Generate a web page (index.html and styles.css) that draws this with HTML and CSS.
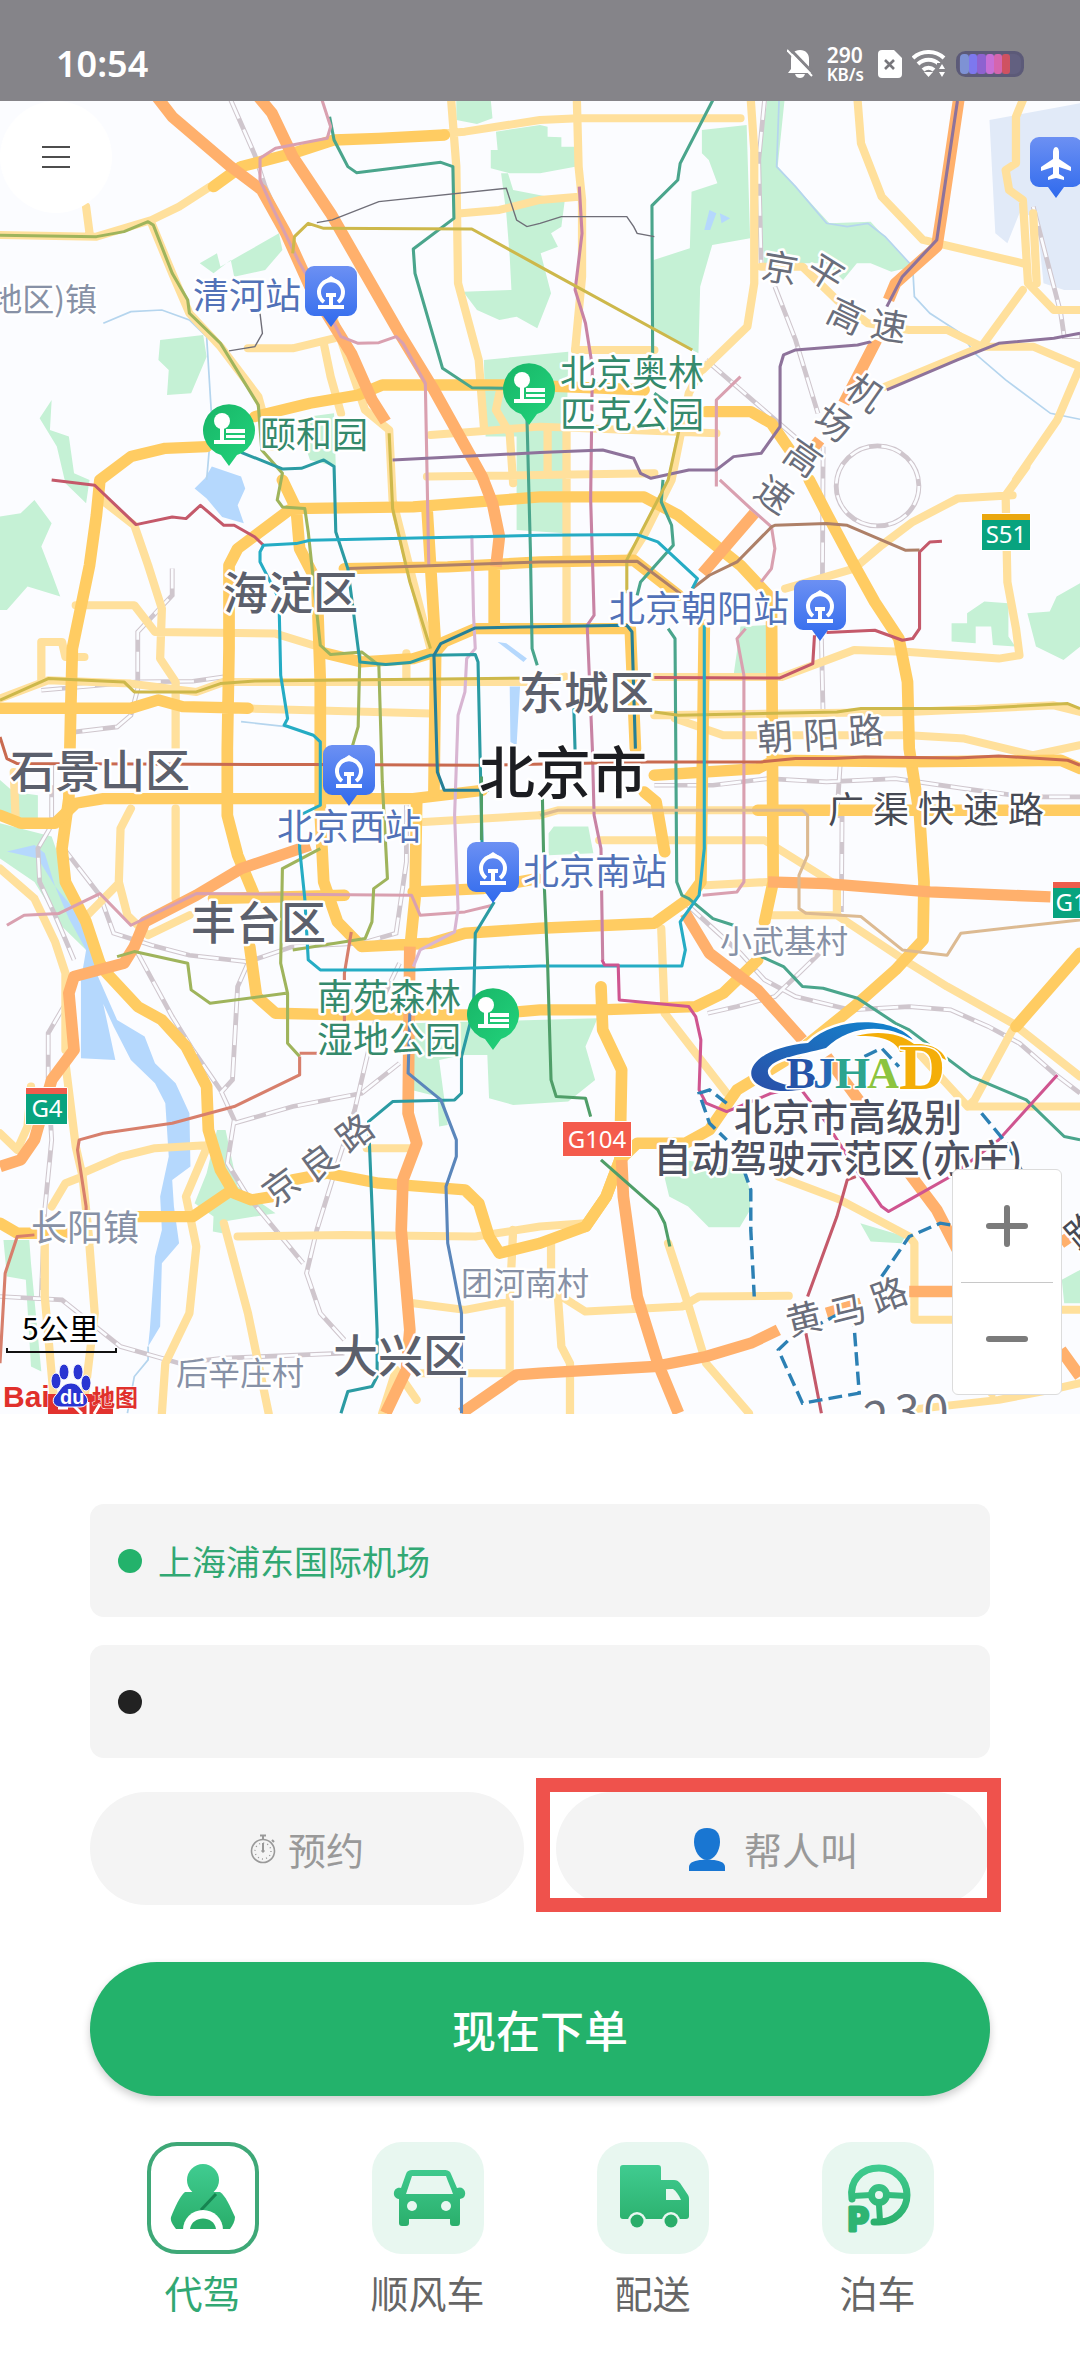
FILE: index.html
```html
<!DOCTYPE html>
<html lang="zh-CN">
<head>
<meta charset="utf-8">
<meta name="viewport" content="width=device-width, initial-scale=1">
<title>代驾</title>
<link rel="stylesheet" href="styles.css">
</head>
<body>
<header class="status">
  <time class="clock">10:54</time>
  <div class="status-icons">
    <svg class="bell" width="26" height="30" viewBox="0 0 26 30" aria-hidden="true">
      <path d="M13 1c6 0 9 4 9 9v8l3 6H1l3-4v-10c0-5 3-9 9-9zM8 25h10c-1 3-3 4-5 4s-4-1-5-4z" fill="#fff"/>
      <path d="M2 -1l26 27" stroke="#858489" stroke-width="3"/><path d="M0 1l25 26" stroke="#fff" stroke-width="2"/>
    </svg>
    <div class="speed"><span class="speed-num">290</span><span class="speed-unit">KB/s</span></div>
    <svg class="sim" width="24" height="28" viewBox="0 0 24 28" aria-hidden="true">
      <path d="M4 0h12l8 8v16a4 4 0 0 1-4 4H4a4 4 0 0 1-4-4V4a4 4 0 0 1 4-4z" fill="#fff"/>
      <path d="M7 10l9 9M16 10l-9 9" stroke="#77767b" stroke-width="2.6"/>
    </svg>
    <svg class="wifi" width="34" height="28" viewBox="0 0 34 28" aria-hidden="true">
      <g fill="none" stroke="#fff" stroke-width="4"><path d="M1 8a23 23 0 0 1 31 0"/><path d="M6 14a15 15 0 0 1 21 0"/><path d="M11 20a8 8 0 0 1 11 0"/></g>
      <path d="M12 22h9l-4.500 5z" fill="#fff"/><path d="M25 13h9v15h-9z" fill="#858489"/>
      <path d="M30 14l3 5h-6zM30 27l3-5h-6z" fill="#fff"/>
    </svg>
    <svg class="battery" width="68" height="26" viewBox="0 0 68 26" aria-hidden="true">
      <rect x="1.500" y="1.500" width="65" height="23" rx="8" fill="#626080" stroke="#5c5a78" stroke-width="3"/>
      <rect x="4" y="3" width="9" height="20" rx="4" fill="#7e92d4"/><rect x="13" y="3" width="8" height="20" rx="3" fill="#7d78ee"/>
      <rect x="21" y="3" width="9" height="20" rx="3" fill="#8e62d0"/><rect x="30" y="3" width="8" height="20" rx="3" fill="#c76fd6"/>
      <rect x="38" y="3" width="8" height="20" rx="3" fill="#d565ae"/><rect x="46" y="3" width="8" height="20" rx="3" fill="#cf5261"/>
    </svg>
  </div>
</header>

<main>
<section class="map" aria-label="地图">
<svg class="map-canvas" viewBox="0 0 1080 1313" role="img" aria-label="北京市">
<defs>
  <linearGradient id="blue" x1="0" y1="0" x2="0" y2="1"><stop offset="0" stop-color="#6c90f3"/><stop offset="1" stop-color="#2f6aed"/></linearGradient>
  <linearGradient id="leaf" x1="0" y1="0" x2="1" y2="1"><stop offset="0" stop-color="#18b567"/><stop offset="1" stop-color="#22d47c"/></linearGradient>
  <linearGradient id="swoosh" x1="0" y1="1" x2="1" y2="0"><stop offset="0" stop-color="#2a4fa8"/><stop offset="1" stop-color="#1286cf"/></linearGradient>
  <g id="station">
    <path d="M-17 0h34a9 9 0 0 1 9 9v32a9 9 0 0 1-9 9h-9l-8 11-8-11h-9a9 9 0 0 1-9-9V9a9 9 0 0 1 9-9z" fill="url(#blue)"/>
    <path d="M-7 36a12 12 0 1 1 14 0" fill="none" stroke="#fff" stroke-width="4"/>
    <path d="M-6 14l6-4 6 4zM-13 39h26v4h-26zM-2 29h4v10h-4zM-5 27h10v4h-10z" fill="#fff"/>
  </g>
  <g id="park">
    <path d="M0 36l-8-11A26 26 0 1 1 8 25z" fill="url(#leaf)"/>
    <circle cx="-7" cy="-9" r="8" fill="#fff"/>
    <path d="M-9-3h4v14h-4zM-15 10h31v4h-31zM-3-1h19v4h-19zM-3 5h19v3h-19z" fill="#fff"/>
  </g>
  <g id="rails">
    <path d="M670 300L740 465 770 560 830 700 900 870M2220 300L2203 480 2210 790M2250 860L2310 1020 2375 1240M2390 1340L2388 1746M2385 1916L2390 2146M2050 1080L2330 1330M500 1706V1786L400 1896V2066L380 2146 340 2181 220 2196M120 2071L400 2046 560 2044 650 2031M150 2296V2476L110 2546 115 2646 160 2746 215 2880M170 2526L290 2686 330 2800 440 2836 550 2866 720 2886 850 2840 1050 2830 1150 2800 1180 2586V2416"/>
    <path d="M185 3020L140 3100V3240L150 3420 130 3630 120 3890M400 2860L500 3050 560 3150 640 3270 680 3360 660 3490 720 3590 880 3790M720 2890L690 2960 675 3240 640 3280M680 3370L850 3320 1050 3280 1160 3190M1160 2890L1100 3020 1050 3240 1030 3330 980 3490 920 3690 890 3820 930 3940 1000 4020M0 3890L180 3900 350 4040 520 4090 650 4075 1000 4060"/>
    <path d="M1900 2356H2070L2230 2336 2400 2346 2600 2336 2800 2366 2980 2391H3136M2440 2286L2430 2446 2445 2450 2443 2736M1990 2710L2150 2860 2220 2940 2310 2990 2470 3030 2640 3020 2760 3030 2870 3080 2960 3130 3060 3220 3136 3280M2055 3040L2140 3020 2250 2990 2390 2850M3000 620L3080 940 3090 1010 3136 1010"/>
    <ellipse cx="2548" cy="1458" rx="120" ry="120"/>
  </g>
</defs>
<rect width="1080" height="1313" fill="#fbfcff"/>
<g transform="translate(0 -101) scale(.3444 .3333)">
  <g class="green">
    <path d="M1325 300H1425L1430 355 1385 372 1325 360zM1440 395L1568 375 1590 380V410L1630 412V440H1670V500L1568 520H1480L1425 505V450H1445zM1455 520H1475L1490 570 1640 600 1630 680 1600 700 1620 740 1570 760 1600 880 1560 985 1500 950 1450 960 1385 930 1345 875 1485 870 1480 770 1470 640zM1405 1080L1650 1055 1640 1600 1500 1590V1310H1410z"/>
    <path d="M580 790L630 760 640 800 810 700 820 750 770 810 680 830 670 780 620 820zM465 1020L590 1005 600 1070 555 1180 485 1185 490 1110 460 1080zM115 1255L150 1200 145 1290 200 1310 215 1420 260 1440 250 1510 190 1450 165 1340zM860 1255L970 1240 975 1400 900 1380z"/>
    <path d="M2038 390L2168 375 2178 715 2068 735 2033 860 2028 1060 1898 990V780L2003 745 2008 575 2083 550 2058 480 2038 460zM2228 300H2278L2258 500 2408 670 2528 665 2648 800 2588 815 2528 790H2488L2448 840 2398 790H2218L2203 480z"/>
    <path d="M0 1550L60 1540 100 1500 150 1570 120 1640 150 1720 175 1790 80 1760 20 1830H0zM0 2340L40 2376 110 2386V2466L0 2446zM0 2470L150 2510 230 2746 250 2850 180 2780 100 2646 0 2576zM2150 1880L2233 1875V2030L2130 2026zM2763 1870H2808V1840L2858 1805 2928 1810V1910L2948 1940 2883 1935 2878 1880H2833V1930L2763 1925zM2983 1840L3048 1835 3068 1790 3136 1750V1940L3088 1980 3008 1940zM1593 2500L1608 2480H1708L1723 2560 1593 2566z"/>
    <path d="M1195 3070L1735 3055 1700 3140 1728 3240 1650 3305 1490 3315 1420 3295 1415 3165H1345L1275 3180 1300 3375 1275 3380 1270 3290 1195 3270zM630 3390H655L690 3560 800 3640 650 3665 645 3700 618 3695 620 3650 565 3610 600 3520zM10 3720H85L90 3790 120 4115 90 4100 75 3840 20 3830zM1928 3525L1988 3480 2158 3510 2178 3570V3630L2148 3682H2058L1998 3620 1943 3590zM2498 3670L2628 3710 2618 3730 2528 3725zM3083 3840L3136 3810V3910H3090z"/>
  </g>
  <path d="M2873 360L3136 310V870H3090L3030 850 3010 650 2960 640 2925 730 2890 700z" fill="#e1eaf8"/>
  <g class="water">
    <path d="M615 1400L700 1430 712 1466 690 1516 708 1570 645 1551 600 1496 565 1466 595 1435zM20 2555L100 2535 130 2560 160 2660 230 2746 270 2870 335 3180 235 3175V2940L250 2850 200 2756 160 2660 110 2576zM255 2860L310 2990 340 3060 420 3110 450 3190 510 3250 550 3340 553 3500 500 3540 505 3620 520 3730 470 3790 465 3980 430 4040 435 3990 450 3770 470 3690 465 3590 490 3470 480 3310 450 3250 380 3180 330 3080 290 2990zM1480 2060H1510L1500 2236 1482 2226zM1445 1926L1470 1930 1530 1976 1520 1986zM2045 690L2060 630 2080 640 2062 690zM2090 640L2120 655 2095 670z"/>
  </g>
  <path class="river" d="M430 4040V4080L390 4130 370 4240M2262 303L2255 500 2310 560 2400 670 2460 680 2520 670 2570 710 2650 800 2655 890 2700 940 2790 1000 2830 1060 2920 1140 3050 1240 3136 1258M300 970L380 935 470 930 550 960 600 1010 615 1260 600 1440M700 2165L830 2180"/>
  <use href="#rails" class="rail-edge"/><use href="#rails" class="rail-core"/>
  <g class="road minor">
    <path d="M0 705L280 710 440 660 520 620 610 560M250 620L260 700M1290 400L1350 395 1568 360 1680 355 2150 355M1310 300L1325 500 1330 850 1390 1080 1405 1280M1675 300L1680 500 1690 600V830L1670 1050M1340 640L1450 630 1568 600 1680 590M2180 300L2190 450V850L2170 980 2040 1110M2490 300L2500 430 2560 590 2680 720 2970 790M2970 300L2950 350V490L2920 510 2930 570 2970 600 2985 850 3060 930 3136 930M3000 640L3010 850M2970 870L2850 1040 2570 1160M2640 990H2750L2850 1040H3000L3136 1100 3070 1260 2950 1440M2210 800H2330L2430 900 2520 970 2640 990"/>
    <path d="M440 670L500 820 550 940 640 1040 750 1190 790 1340M720 1045H850L970 1015M940 1030L960 1130 990 1240M970 960L1060 1230 1130 1290 1140 1500 1200 1746 1250 1946M1250 1305L1568 1280 2080 1300M1240 1430L1568 1425 1900 1420M1645 1280V1880M1590 1290V1420M1450 1180L1440 1230 1480 1300 1490 1450M2000 1180L1950 1440 1870 1606 1820 1686M1670 1050H1900M2040 1100L2000 1180"/>
    <path d="M290 1496L390 1576 430 1696 470 1826 465 1976 510 2046V2246M510 2426V2696M220 1816H390L450 1896 800 1901 910 1936M120 2046V1926H180L190 1971H245M0 2096L140 2041 380 2051 570 2076 650 2046H1568L1640 2030M730 2126L1250 2141M40 2316L45 2446M0 2606L100 2696 160 2826 190 2920V3150M380 2426L350 2486 345 2646 370 2746 430 2806 550 2746M240 2760L345 2650M1230 2466L1568 2446M1180 1960V2040"/>
    <path d="M1568 2446L1620 2431H2330M2280 1766L2480 1706 2560 1636 2650 1566 2780 1496 2940 1486M2980 1400L2920 1486 2925 1746 2950 1886 2960 1966 2900 1976 2640 1956 2480 1950 2270 2031 1900 2031M1900 2146L2640 2136 3060 2116 3136 2136M1960 2156L2100 2206H2640L2800 2216 3000 2266 3136 2236M1740 2521H2220L2430 2656V2746M2050 2656L2230 2646M2230 2746H2430L2640 2890 2750 2960 2940 3070 3136 3230"/>
    <path d="M1920 2786L1930 3040 2080 3240 2110 3280M2940 3090L2830 3300 2810 3320H3136M2650 3140L2810 3320M240 3520L350 3470 450 3445 610 3435M610 3420L540 3590 570 3740 550 3940 480 4090 470 4240M650 3670L720 3940 780 4240M690 3710L1000 3705 1380 3710 1568 3680M1568 3680L1700 3670M130 3720V3890L160 4240M260 3740L275 3940 240 4240M240 3530L190 3550 150 3620M190 3190L220 3440 240 3530 260 3730M0 3400L50 3450 80 3380 90 3260M1065 3445H1200M1200 3910L1350 3930 1480 3905 1490 3690M1480 3910V4120H1210M1110 4240L1150 4110 1210 4200M1600 3730V3870L1700 3935 1980 3920 2030 3890 2290 3888M1620 3890L1630 4040 1655 4090V4240M1940 3730L2000 3920 2050 4090 2175 4240M2260 3530L2440 3600 2640 3710 2655 3730V3960H2780M2640 4230L2900 4200 3050 4170 3136 4150M2880 4180V4090M3080 3930H3136"/>
  </g>
  <g class="road main">
    <path d="M620 560L700 500 850 460 970 420 1100 415 1290 405M600 1340L480 1345 380 1370 290 1440 280 1546 260 1696 210 1946 205 2146 200 2396 180 2546 190 2646 250 2766 290 2890 310 2920 400 3020 470 3060 540 3140 600 3260 605 3390 640 3510 680 3580 730 3600 790 3590M850 3540L950 3520 1100 3550 1350 3570 1390 3610 1420 3710 1450 3760 1568 3730 1700 3680 1760 3590 1800 3480 1850 3430 1990 3430 2060 3390 2140 3270 2300 3170 2480 3020 2600 2910 2680 2820 2683 2646 2670 2446 2640 2246 2635 2046 2610 1916 2540 1806 2470 1676 2400 1540 2350 1440"/>
    <path d="M740 1250L900 1210 1040 1185 1110 1155 1500 1155 1870 1170M2050 1235H2180L2240 1270 2300 1360M0 2125H380L460 2100 530 2120 720 2125M0 2446L60 2470H160L220 2410 300 2396H1200L1400 2371M840 1530L690 1646 665 1696V1946L660 2246V2446L690 2566 740 2690M725 2840L745 2990 800 3040 1000 3045H1400L1568 3030H1740L2020 3020 2100 2980 2200 2880"/>
    <path d="M820 1440L860 1526 870 1646 920 1746 930 2046V2446L940 2646 980 2766 1050 2840 1250 2830 1350 2800 1568 2785 1900 2770 2000 2696 2035 2646 2045 1876M850 1526L1200 1521 1568 1491H1870L1970 1546 2150 1696 2240 1796 2245 2646 2220 2766M1000 1706L1300 1701 1568 1686 1840 1681 1970 1786M1240 1526L1265 1946 1260 2376M1435 1700V1870M1210 2396L1205 2696 1190 2850M1200 2676L1400 2666 1560 2636M620 2696L1000 2686"/>
    <path d="M930 1956L1050 1986 1200 1976 1265 1956 1290 1926 1380 1886H1830L1845 2246M1870 2376L1905 2406 1930 2556M1900 2326L2200 2306 2250 2281 2640 2286 3080 2281 3136 2306M2200 2431H3136M0 3670L50 3700H190M400 3650H560L660 3580M1745 2960L1750 3090 1805 3210 1800 3480M1800 3480L1760 3590 1700 3680M2950 3080L3136 2860"/>
  </g>
  <g class="road highway">
    <path d="M455 290L500 350 670 500 760 570 830 700 900 860 960 960 1020 1060 1080 1200 1120 1265M750 290L790 340 850 470 960 640 1060 820 1160 1000 1260 1170 1400 1430 1430 1510 1450 1610 1440 1700M2785 290L2735 640 2720 740 2600 850 2580 900M2545 1020L2450 1210M2380 1320L2340 1370M2190 1540L2040 1720M900 2536L700 2606 570 2686 420 2766 390 2840 360 2890 215 2930 200 2980 215 3150 150 3240 100 3420 60 3480 0 3500M1190 2840L1185 3340 1210 3430 1170 3540 1165 3690 1190 3990 1180 4110 1120 4240M2230 2646L2400 2651 2700 2676 3050 2691M1990 2740L2060 2860 2200 2970 2330 3120M2400 3170L2500 3310M2640 3520L2720 3630 2790 3770M3080 4050L3136 4130M1805 3480L1810 3590 1850 3890 1910 4090 1970 4240M1340 4240L1500 4125 1568 4120 1900 4100 2050 4070 2180 4030 2260 3990M2400 3940L2500 3910M2640 3875H2780M3080 3730L3136 3690"/>
  </g>
  <g class="metro">
    <g stroke="#4aa58c"><path d="M957 350L970 420 1010 500 1035 518 1280 487 1315 500 1318 655 1200 747 1205 820 1285 1105 1370 1163 1465 1165M2070 300L1975 490 1968 540 1893 617 1895 1060M1900 1180L1940 1210M1530 1250L1540 1646 1545 1946 1560 1996M1925 1440L1920 1506 1950 1576 1955 1636 1860 1746 1850 1786M1940 1886L1960 1916 1965 2646 1980 2686 2000 2696 2070 2756 2130 2776M2210 2870L2275 2900 2330 2960 2390 2965 2490 2995 2600 3070 2640 3090 2820 3230 2980 3300 3090 3410 3136 3420"/></g>
    <g stroke="#d9a0b0"><path d="M935 300L960 380 950 415 800 445 755 475V540L790 620 870 790 960 950 990 1010 1040 1030 1100 1028 1150 1010 1170 1030 1235 1150 1245 1696M2090 1440L2180 1526 2240 1581 2250 1646 2240 1706 2210 1746M2165 1886L2140 1916 2160 2026V2646L2140 2676 2040 2686M20 2776L70 2746 170 2741 290 2681 380 2776 570 2681 1195 2686 1220 2746 1350 2736 1430 2716M2080 1460V1200L2150 1130"/></g>
    <g stroke="#d8b5d2"><path d="M1370 1606L1375 1846 1380 1946 1355 1976 1350 2076 1330 2146 1320 2446 1330 2726 1320 2796 1220 2850 1200 2900"/></g>
    <g stroke="#c883a4"><path d="M1682 560L1690 700 1670 870 1700 970 1720 1100 1715 1496 1725 1846 1705 1876 1720 2246 1725 2446 1745 2546 1750 2880"/></g>
    <g stroke="#8e739b"><path d="M1140 1380L1568 1358 1750 1350 1840 1375 1860 1420 1890 1435 2000 1410H2080L2130 1370 2210 1360 2265 1280V1100L2275 1065 2310 1050 2490 1035 2530 1025M2575 1170L2780 1080 2900 1030 3060 1015 3136 1000M2780 303L2720 720 2620 830 2575 920"/></g>
    <g stroke="#9fb45c"><path d="M0 706L280 710 360 695 430 665 445 675 500 820 545 900 550 940 640 1030 750 1215 760 1350 820 1420 805 1500 820 1521 885 1526 895 1596 930 1936 960 1964 1050 1956 1100 1996 1110 2346 1125 2636 1085 2666 1080 2766 1060 2816 850 2850M340 2870L390 2855 545 2890 555 2970 610 3010 830 2980M1045 1960L1040 2180 1020 2250M930 2546L820 2606 815 2890 835 2980V3130L870 3170"/></g>
    <g stroke="#cdb84b"><path d="M850 760L855 710 895 670 940 685 1370 687 1568 800 2010 1050M0 2101L140 2036 360 2046 390 2076H570L640 2051 740 2043 1568 2034M1900 2136L1970 2146 2430 2136 2500 2126H2830L3100 2111 3136 2126M1130 1300L1140 1526 1190 1746 1250 1946M1980 1250L1940 1440 1820 1680V1780"/></g>
    <g stroke="#c96a50"><path d="M0 2211L20 2276 50 2291 900 2294 1400 2296 1880 2286H2210L2310 2276 2420 2276 2510 2271 2780 2274 2900 2268 3100 2281 3136 2296"/></g>
    <g stroke="#d77f6c"><path d="M870 3170V3225L680 3320 500 3370 300 3400 230 3420 225 3450 250 3620V3640M100 3705L50 3710 15 3820 0 4090M1020 2796L1000 2920V3080M870 3160H920"/></g>
    <g stroke="#c4596a"><path d="M150 1440L275 1456 395 1574 500 1551 540 1556 582 1516 650 1576 680 1576 740 1611 765 1636M1900 2033L2265 2034 2360 1991 2365 1906M2400 1898L2540 1891 2620 1921 2650 1916 2670 1886V1656L2700 1626 2735 1624M2485 3530L2460 3540 2430 3650 2345 3890M2340 4000L2385 4240"/></g>
    <g stroke="#ae8068"><path d="M2010 1766L2060 1726 2140 1686 2240 1581 2250 1576 2400 1571 2460 1576 2630 1651 2670 1650M1010 1706L1568 1686 1850 1684 1975 1781"/></g>
    <g stroke="#dcba92"><path d="M1568 2446L1620 2431H2330L2345 2446V2566L2320 2626V2726L2340 2740 2500 2750 2620 2850 2750 2866 2790 2800 3136 2760"/></g>
    <g stroke="#2b9ba3"><path d="M700 1357L820 1407 875 1405 940 1380 970 1400 975 1596 1010 1706 1045 1986 1120 1994 1190 1988 1250 1966 1380 1964 1388 1986 1400 2546M1435 2706L1380 2800 1375 3030 1340 3170V3280L1320 3300 1140 3305 1070 3365 1095 3990V4130L1080 4160 1010 4175 990 4240M1665 2080L1670 2260"/></g>
    <g stroke="#25acc4"><path d="M2010 1766L2025 1736 1910 1626 1850 1604 1568 1606 900 1621 860 1631 765 1636 755 1656V1686L810 1796 815 2026 835 2156 825 2176 910 2206 930 2226V2416L870 2446V2546L885 2696 895 2880 930 2910H1200L1568 2898H1980L1990 2850 1975 2766 2030 2686 2045 2546V1876"/></g>
    <g stroke="#267f96"><path d="M1420 2371L1290 2371 1270 2316 1260 1966 1280 1931 1380 1884 1820 1876 1835 1896 1845 2246"/></g>
    <g stroke="#4f9e68"><path d="M1575 2396L1580 2646 1590 2890 1600 3240 1615 3290 1700 3295 1715 3350M1745 3480L1910 3630 1930 3670 1945 3740M1398 2330V2520"/></g>
    <g stroke="#5a86bb"><path d="M1190 3040L1185 3220 1280 3300 1325 3420V3470L1295 3560 1300 3730 1340 3940V4240"/></g>
    <g stroke="#cf5590"><path d="M1748 2880L1755 2895H1795L1798 3000 2000 3020 2020 3050 2035 3120 2030 3270 2050 3310 2110 3335 2240 3280 2320 3260 2400 3370 2480 3500 2560 3620 2580 3635 2640 3600 2760 3530 2900 3420 3070 3225"/></g>
  </g>
  <path class="track" d="M920 668L965 660 1100 605 1470 565 1500 660 1530 680 1568 670 1630 650H1820L1840 680 1850 700 1900 710M755 940L762 1000 740 1040 665 1053"/>
  <path class="zone" d="M2110 3310L2060 3270 2030 3280 2060 3370 2110 3420M2160 3510L2180 3570V3690L2190 3890M2440 3940L2290 4020 2260 4050 2330 4210 2495 4180 2480 3980M2560 3830L2640 3710 2730 3670 2790 3680M2850 3340L2930 3440 2970 3520M2510 3170L2560 3145 2610 3200"/>
</g>
<g transform="translate(0 -101)">
  <g class="t36 poi-blue"><text x="193" y="309">清河站</text><text x="609" y="622">北京朝阳站</text><text x="277" y="840">北京西站</text><text x="523" y="885">北京南站</text></g>
  <g class="t36 poi-green"><text x="260" y="448">颐和园</text><text x="560" y="386">北京奥林</text><text x="560" y="428">匹克公园</text><text x="317" y="1010">南苑森林</text><text x="317" y="1053">湿地公园</text></g>
  <g class="t45 district"><text x="223" y="610">海淀区</text><text x="519" y="710">东城区</text><text x="10" y="788">石景山区</text><text x="191" y="940">丰台区</text><text x="333" y="1373">大兴区</text></g>
  <text class="city" x="479" y="793">北京市</text>
  <g class="t32 town"><text x="97" y="311" text-anchor="end">地区)镇</text><text x="720" y="953">小武基村</text><text x="461" y="1295">团河南村</text><text x="176" y="1385">后辛庄村</text></g>
  <g class="t36 town"><text x="31" y="1241">长阳镇</text></g>
  <g class="t36 street">
    <text transform="translate(775 737) rotate(-4)" y="13">朝</text><text transform="translate(821 735) rotate(-4)" y="13">阳</text><text transform="translate(866 731) rotate(-4)" y="13">路</text>
    <text transform="translate(281 1187) rotate(-36)" y="13">京</text><text transform="translate(319 1163) rotate(-36)" y="13">良</text><text transform="translate(355 1133) rotate(-36)" y="13">路</text>
    <text transform="translate(780 268) rotate(10)" y="13">京</text><text transform="translate(826 273) rotate(32)" y="13">平</text><text transform="translate(846 316) rotate(26)" y="13">高</text><text transform="translate(889 326) rotate(10)" y="13">速</text>
    <text transform="translate(865 393) rotate(35)" y="13">机</text><text transform="translate(834 423) rotate(35)" y="13">场</text><text transform="translate(803 458) rotate(35)" y="13">高</text><text transform="translate(774 495) rotate(35)" y="13">速</text>
    <text transform="translate(804 1319) rotate(-14)" y="13">黄</text><text transform="translate(848 1311) rotate(-14)" y="13">马</text><text transform="translate(889 1295) rotate(-20)" y="13">路</text>
    <g class="t45"><text transform="translate(877 1418) rotate(-8)" y="16">2</text><text transform="translate(907 1411)" y="17">3</text><text transform="translate(936 1411)" y="17">0</text></g>
  </g>
  <g class="t36 express"><text x="846" y="823">广</text><text x="891" y="823">渠</text><text x="936" y="822">快</text><text x="981" y="823">速</text><text x="1026" y="823">路</text><text transform="translate(1084 1230) rotate(-40)" y="13">路</text></g>
  <use href="#station" x="331" y="266"/><use href="#station" x="820" y="580"/><use href="#station" x="349" y="745"/><use href="#station" x="493" y="842"/>
  <use href="#park" x="229" y="430"/><use href="#park" x="529" y="389"/><use href="#park" x="493" y="1014"/>
  <g transform="translate(1056 137)">
    <path d="M-17 0h34a9 9 0 0 1 9 9v32a9 9 0 0 1-9 9h-9l-8 11-8-11h-9a9 9 0 0 1-9-9V9a9 9 0 0 1 9-9z" fill="url(#blue)"/>
    <path d="M0 10c2 0 3 3 3 5v7l12 8v4l-12-4v7l5 3v3l-8-2-8 2v-3l5-3v-7l-12 4v-4l12-8v-7c0-2 1-5 3-5z" fill="#fff"/>
  </g>
  <g class="shield">
    <rect x="981" y="513" width="50" height="38" rx="2" fill="#fff"/><path d="M982 514h48v36h-48z" fill="#08a37f"/><path d="M982 514h48v6h-48z" fill="#eaa70e"/><text x="1006" y="543">S51</text>
    <rect x="1052" y="881" width="50" height="38" fill="#fff"/><path d="M1053 882h48v36h-48z" fill="#08a37f"/><path d="M1053 882h48v6h-48z" fill="#ee5d4c"/><text x="1078" y="911">G11</text>
    <rect x="25" y="1087" width="43" height="38" rx="2" fill="#fff"/><path d="M26 1088h41v36H26z" fill="#08a37f"/><path d="M26 1088h41v6H26z" fill="#ee5d4c"/><text x="47" y="1117">G4</text>
    <rect x="562" y="1121" width="70" height="36" rx="2" fill="#fff"/><path d="M563 1122h68v34h-68z" fill="#f45b4c"/><text x="597" y="1148">G104</text>
  </g>
  <g class="bjhad">
    <path d="M913 1040C896 1018 838 1014 808 1043 750 1048 736 1080 768 1089 778 1092 790 1091 800 1090L810 1087C788 1087 766 1082 768 1070 772 1058 800 1055 826 1048 848 1026 884 1022 913 1040z" fill="url(#swoosh)" stroke="#fff" stroke-width="5" paint-order="stroke"/>
    <path d="M856 1036C878 1030 900 1033 914 1044 930 1043 944 1050 946 1060L934 1054C924 1049 912 1050 900 1052 896 1040 880 1035 856 1036z" fill="#f4ae08" stroke="#fff" stroke-width="4" paint-order="stroke"/>
    <text x="786" y="1088" fill="#2553a8">B</text><text x="813" y="1088" fill="#2468b5">J</text><text x="835" y="1088" fill="#2da48f">H</text><text x="867" y="1088" fill="#8cc43f">A</text><text class="big-d" x="899" y="1089" fill="#f4ae08">D</text>
  </g>
  <g class="t38 zone-name"><text x="848" y="1131">北京市高级别</text><text x="838" y="1172">自动驾驶示范区(亦庄)</text></g>
  <text class="scale-text" x="22" y="1340">5公里</text>
  <path d="M7 1348v4h109v-4" fill="none" stroke="#111" stroke-width="2"/>
  <g class="baidu">
    <path d="M48 1394h65v20H48z" fill="#e2322e"/><path d="M58 1408h10M74 1406l8 8M88 1402v12M100 1404l-6 10" stroke="#fff" stroke-width="3"/>
    <text x="3" y="1407" class="bai">Bai</text><text x="92" y="1406" class="ditu">地图</text>
    <g fill="#2a35d2" stroke="#fff" stroke-width="1"><ellipse cx="56" cy="1381" rx="5" ry="8"/><ellipse cx="64" cy="1372" rx="5" ry="8"/><ellipse cx="78" cy="1372" rx="5" ry="8"/><ellipse cx="86" cy="1383" rx="5" ry="8"/><path d="M71 1383c9 0 10 8 15 13 4 6 0 11-6 11H61c-7 0-10-6-6-11 5-5 7-13 16-13z"/></g>
    <text x="60" y="1404" class="du">du</text>
  </g>
</g>
</svg>
<button class="menu" aria-label="菜单"><svg width="30" height="24" viewBox="0 0 30 24"><path d="M1 2h28M1 12h28M1 22h28" stroke="#4d4d4d" stroke-width="2"/></svg></button>
<div class="zoom">
  <button aria-label="放大"><svg width="44" height="44" viewBox="0 0 44 44"><path d="M22 4v36M4 22h36" stroke="#7b7b7b" stroke-width="6" stroke-linecap="round"/></svg></button>
  <button aria-label="缩小"><svg width="44" height="44" viewBox="0 0 44 44"><path d="M4 22h36" stroke="#7b7b7b" stroke-width="6" stroke-linecap="round"/></svg></button>
</div>
</section>

<form class="order">
  <label class="field"><span class="dot dot-from"></span><input type="text" value="上海浦东国际机场" aria-label="出发地"></label>
  <label class="field"><span class="dot"></span><input type="text" aria-label="目的地"></label>
  <div class="options">
    <button type="button" class="pill">
      <svg width="26" height="30" viewBox="0 0 26 30" fill="none" stroke="#999" aria-hidden="true"><circle cx="13" cy="17" r="11.500" stroke-width="1.600"/><path d="M10 1.500h6M13 2v4M22 6l2 2M13 9v8" stroke-width="2"/><circle cx="13" cy="17" r="8" stroke-width="1.400" stroke-dasharray="1 3.190"/><circle cx="13" cy="17" r="1.200" fill="#999"/></svg>
      <span>预约</span>
    </button>
    <button type="button" class="pill pill-marked">
      <svg width="38" height="44" viewBox="0 0 38 44" fill="#1976d2" aria-hidden="true"><path d="M19 1c9 0 13 5 13 14S26 33 19 33 6 24 6 15 10 1 19 1z"/><path d="M1 44v-4c0-5 7-7 13-7 3-1 7-1 10 0 6 0 13 2 13 7v4z"/></svg>
      <span>帮人叫</span>
    </button>
  </div>
  <button type="submit" class="submit">现在下单</button>
</form>

<nav class="services">
  <svg width="0" height="0" class="defs" aria-hidden="true"><defs><linearGradient id="g" gradientUnits="userSpaceOnUse" x1="0" y1="20" x2="0" y2="88"><stop offset="0" stop-color="#41cd92"/><stop offset="1" stop-color="#29ad69"/></linearGradient></defs></svg>
  <button class="service active"><span class="tile"><svg viewBox="0 0 112 112" aria-hidden="true">
    <path d="M38 50h35c5 3 10 14 15 25 0 4-2 8-5 12H29c-3-4-6-8-5-12 4-10 9-21 14-25z" fill="url(#g)"/><circle cx="56" cy="38" r="16" fill="url(#g)"/>
    <path d="M69 52L54 68" stroke="#168451" stroke-width="3"/><path d="M36 88a20 20 0 0 1 40 0z" fill="#fff"/><path d="M43 87c2-14 24-14 26 0z" fill="#29ad69"/></svg></span><span>代驾</span></button>
  <button class="service"><span class="tile"><svg viewBox="0 0 112 112" aria-hidden="true">
    <path d="M40 28h32c4 0 6 1 7 4l6 14c7-3 11 6 6 10l-3 1v23c0 3-1 4-3 4h-4c-2 0-3-1-3-3v-4H37v4c0 2-1 3-3 3h-4c-2 0-3-1-3-3V57c-8-1-6-13 2-11l5-14c1-3 3-4 6-4z" fill="url(#g)"/>
    <path d="M40 34h34c2 6 5 12 7 18H34z" fill="#e8f7f0"/><circle cx="40" cy="64" r="5" fill="#e8f7f0"/><circle cx="74" cy="64" r="5" fill="#e8f7f0"/></svg></span><span>顺风车</span></button>
  <button class="service"><span class="tile"><svg viewBox="0 0 112 112" aria-hidden="true">
    <path d="M26 23h35c2 0 3 1 3 3v12h13c3 0 4 1 6 3l8 12c1 2 1 3 1 5v16c0 2-1 3-3 3H26c-2 0-3-1-3-3V26c0-2 1-3 3-3z" fill="url(#g)"/>
    <path d="M69 47h7c3 2 6 6 8 11H69z" fill="#e8f7f0"/><circle cx="40" cy="79" r="9" fill="#e8f7f0"/><circle cx="74" cy="79" r="9" fill="#e8f7f0"/><circle cx="40" cy="79" r="6.500" fill="#29ad69"/><circle cx="74" cy="79" r="6.500" fill="#29ad69"/></svg></span><span>配送</span></button>
  <button class="service"><span class="tile"><svg viewBox="0 0 112 112" aria-hidden="true">
    <g fill="none" stroke="url(#g)" stroke-width="7" stroke-linecap="round"><path d="M30 57C27 38 40 26 57 26c16 0 28 12 28 27S73 80 57 80h-5"/><path d="M31 54l18-1M66 53l19 1M57 63l1 16" stroke-width="6"/><circle cx="57" cy="53" r="7.500"/></g>
    <text x="26" y="89" class="park-p">P</text></svg></span><span>泊车</span></button>
</nav>
</main>
</body>
</html>
```
FILE: styles.css
```css
* { box-sizing: border-box; }
body {
  margin: 0;
  background: #fff;
  font-family: "Noto Sans", "Noto Sans CJK SC", sans-serif;
}
button, input { font: inherit; color: inherit; border: 0; padding: 0; background: none; }
button { cursor: pointer; }

.status {
  display: flex;
  justify-content: space-between;
  align-items: center;
  height: 101px;
  padding: 26px 56px 0;
  background: #858489;
  color: #fff;
}
.clock { font-size: 36px; font-weight: 600; }
.status-icons { display: flex; align-items: center; gap: 10px; }
.speed { display: flex; flex-direction: column; margin: 0 4px; font-weight: 600; }
.speed-num { font-size: 21px; line-height: 22px; }
.speed-unit { font-size: 17px; line-height: 18px; }

.map { position: relative; }
.map-canvas { display: block; width: 100%; overflow: hidden; }
.green { fill: #c5f1d5; }
.water { fill: #b5d8fd; }
.river { fill: none; stroke: #b5d5ee; stroke-width: 5; }
.rail-edge { fill: none; stroke: #cfc6cd; stroke-width: 14; }
.rail-core { fill: none; stroke: #fbfcff; stroke-width: 8; stroke-dasharray: 60 36; }
.road { fill: none; stroke-linejoin: round; stroke-linecap: round; }
.minor { stroke: #ffe09c; stroke-width: 24; }
.main { stroke: #ffcc62; stroke-width: 34; }
.highway { stroke: #ffb06c; stroke-width: 34; stroke-linecap: butt; }
.metro { fill: none; stroke-width: 9; stroke-linejoin: round; }
.track { fill: none; stroke: #6f6e78; stroke-width: 4; }
.zone { fill: none; stroke: #2c80b4; stroke-width: 10; stroke-dasharray: 40 18; }

.map-canvas text {
  font-family: "Noto Sans CJK SC", sans-serif;
  paint-order: stroke;
  stroke: #fff;
  stroke-width: 5px;
  stroke-linejoin: round;
}
.t32 { font-size: 32px; }
.t36 { font-size: 36px; }
.t38 { font-size: 38px; }
.t45 { font-size: 45px; }
.poi-blue { fill: #5272b8; }
.poi-green { fill: #358a6c; }
.district { fill: #5c606c; font-weight: 500; }
.city { fill: #1c1d21; font-size: 56px; font-weight: 500; }
.town { fill: #8791a6; }
.street { fill: #6a6e7b; text-anchor: middle; }
.express { fill: #474a54; text-anchor: middle; }
.zone-name { fill: #4c5060; font-weight: 500; text-anchor: middle; }
.map-canvas .shield text { fill: #fff; stroke: none; font-family: "Noto Sans", sans-serif; font-size: 24px; text-anchor: middle; }
.map-canvas .bjhad text { font-family: "Liberation Serif", serif; font-size: 45px; font-weight: 700; stroke-width: 3px; }
.map-canvas .bjhad .big-d { font-size: 64px; }
.scale-text { font-size: 30px; fill: #000; }
.map-canvas .baidu text { font-family: "Liberation Sans", "Noto Sans CJK SC", sans-serif; font-weight: 700; stroke-width: 1px; }
.bai { fill: #e0302c; font-size: 30px; }
.ditu { fill: #e0302c; font-size: 23px; }
.map-canvas .baidu .du { fill: #fff; stroke: none; font-size: 20px; }

.menu {
  position: absolute;
  top: 0;
  left: 0;
  display: grid;
  place-items: center;
  width: 112px;
  height: 112px;
  border-radius: 50%;
  background: #fff;
}
.zoom {
  position: absolute;
  right: 18px;
  bottom: 19px;
  display: flex;
  flex-direction: column;
  width: 110px;
  padding: 0 8px;
  border: 1px solid #dcdcdc;
  border-radius: 6px;
  background: #fff;
}
.zoom button { display: grid; place-items: center; height: 112px; }
.zoom button + button { border-top: 1px solid #c8c8c8; }

.order { padding: 90px 90px 0; }
.field {
  display: flex;
  align-items: center;
  gap: 16px;
  height: 113px;
  margin-bottom: 28px;
  padding: 0 28px;
  border-radius: 14px;
  background: #f4f4f4;
}
.dot { flex: none; width: 24px; height: 24px; border-radius: 50%; background: #222; }
.dot-from { background: #23b26b; }
.field input { flex: 1; min-width: 0; font-size: 34px; color: #31a873; outline: 0; }
.options { display: grid; grid-template-columns: 1fr 1fr; gap: 32px; margin-top: 34px; }
.pill {
  position: relative;
  display: flex;
  align-items: center;
  justify-content: center;
  gap: 12px;
  height: 113px;
  border-radius: 57px;
  background: #f4f4f4;
  color: #999;
  font-size: 38px;
}
.pill-marked::after {
  content: "";
  position: absolute;
  inset: -14px -11px -7px -20px;
  border: 14px solid #ef524c;
}
.pill-marked { gap: 18px; }
.submit {
  display: block;
  width: 100%;
  height: 134px;
  margin-top: 57px;
  border-radius: 67px;
  background: #23b26b;
  box-shadow: 0 4px 8px #0003;
  color: #fff;
  font-size: 44px;
  font-weight: 500;
}
.services {
  display: grid;
  grid-template-columns: repeat(4, 1fr);
  padding: 46px 90px 40px;
}
.defs { position: absolute; }
.service {
  display: flex;
  flex-direction: column;
  align-items: center;
  gap: 10px;
  color: #666;
  font-size: 38px;
}
.tile { width: 112px; height: 112px; border-radius: 30px; background: #e8f7f0; }
.tile svg { display: block; width: 112px; height: 112px; }
.active { color: #31a873; }
.active .tile { background: #fff; box-shadow: inset 0 0 0 4px #3ea877; }
.park-p { fill: #2fb473; stroke: #2fb473; stroke-width: 3px; stroke-linejoin: round; font-family: Inter, sans-serif; font-size: 32px; font-weight: 800; }
```
